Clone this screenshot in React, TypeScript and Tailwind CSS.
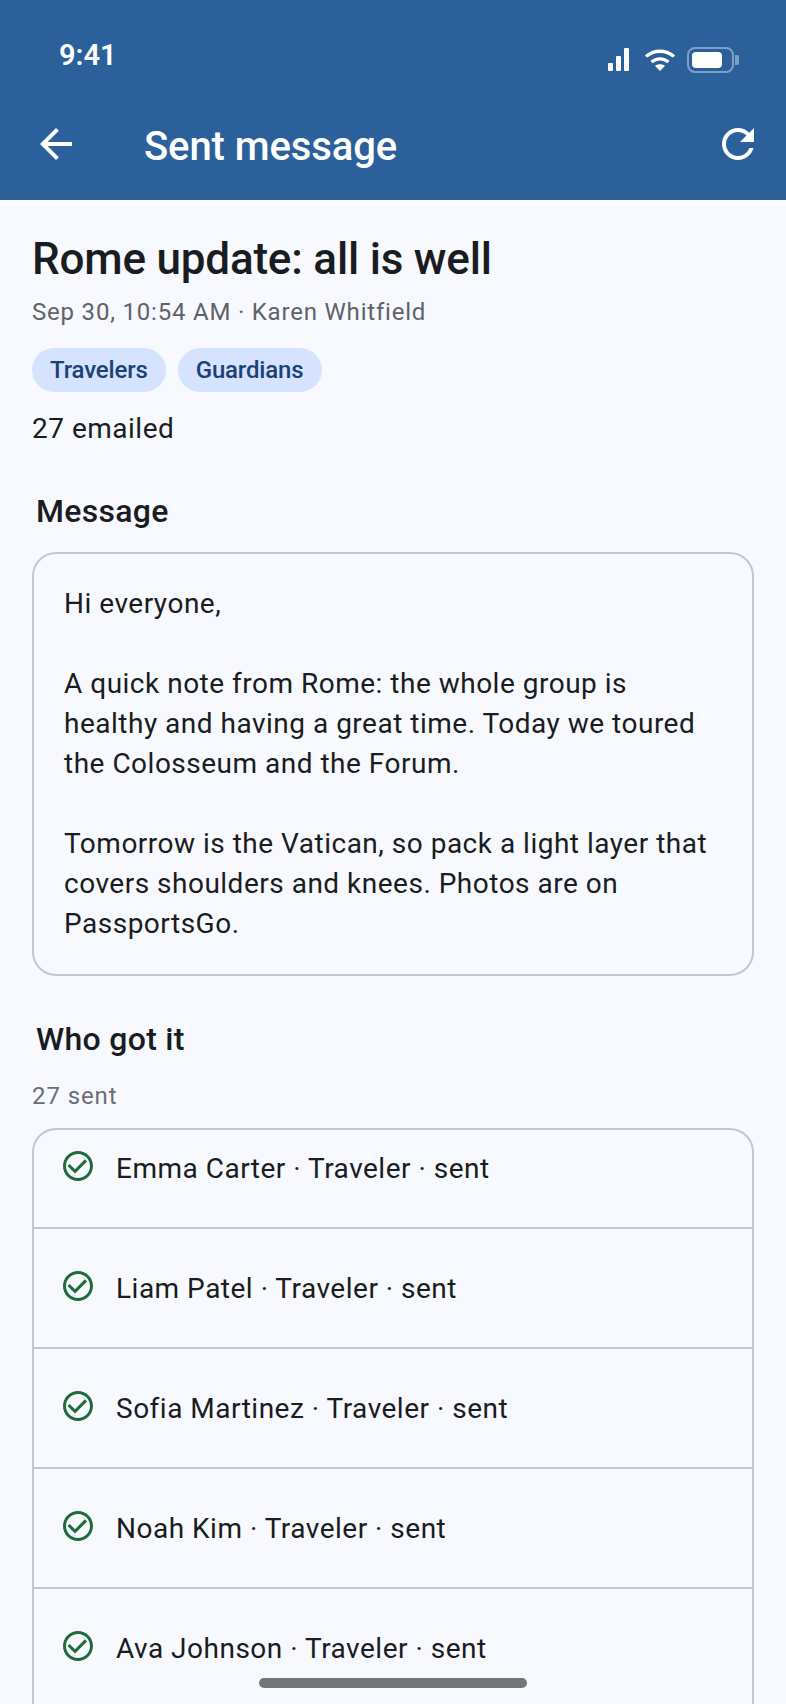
const recipients = [
  'Emma Carter · Traveler · sent',
  'Liam Patel · Traveler · sent',
  'Sofia Martinez · Traveler · sent',
  'Noah Kim · Traveler · sent',
  'Ava Johnson · Traveler · sent',
];

function CheckCircle() {
  return (
    <svg width="36" height="36" viewBox="0 0 24 24" fill="#1f6b3a" className="shrink-0">
      <path d="M16.59 7.58L10 14.17l-3.59-3.58L5 12l5 5 8-8zM12 2C6.48 2 2 6.48 2 12s4.48 10 10 10 10-4.48 10-10S17.52 2 12 2zm0 18c-4.42 0-8-3.58-8-8s3.58-8 8-8 8 3.58 8 8-3.58 8-8 8z" />
    </svg>
  );
}

function StatusIcons() {
  return (
    <div className="flex items-center">
      <svg width="22" height="24" viewBox="0 0 22 24" fill="white">
        <rect x="0" y="15" width="5" height="8" rx="1" />
        <rect x="8" y="8" width="5" height="15" rx="1" />
        <rect x="16" y="0" width="5" height="23" rx="1" />
      </svg>
      <svg width="32" height="24" viewBox="0 0 32 24" fill="none" stroke="white" strokeWidth="3.4" className="ml-[14px]">
        <path d="M2 8.5C10 1.5 22 1.5 30 8.5" />
        <path d="M7.5 14C12.5 9.8 19.5 9.8 24.5 14" />
        <path d="M16 23l-5-5.2c3-2 7-2 10 0z" fill="white" stroke="none" />
      </svg>
      <div className="ml-[11px] flex items-center">
        <div className="flex h-[26px] w-[47px] items-center rounded-[8px] border-2 border-[#7fa0c6] pl-[3px]">
          <div className="h-[16px] w-[30px] rounded-[4px] bg-white" />
        </div>
        <div className="ml-[1px] h-[10px] w-[4px] rounded-r-[2px] bg-[#7fa0c6]" />
      </div>
    </div>
  );
}

export default function App() {
  return (
    <div className="relative h-[1704px] w-[786px] overflow-hidden bg-[#f8f9ff] font-['Roboto',sans-serif] text-[#191c20]">
      <header className="h-[200px] bg-[#2b609b] text-white">
        <div className="flex h-[88px] items-end justify-between pb-[15px] pl-[59px] pr-[47px]">
          <span className="text-[29px] font-semibold leading-[36px]">9:41</span>
          <StatusIcons />
        </div>
        <div className="flex h-[112px] items-center pl-[32px] pr-[24px]">
          <svg width="48" height="48" viewBox="0 0 24 24" fill="white">
            <path d="M20 11H7.83l5.59-5.59L12 4l-8 8 8 8 1.41-1.41L7.83 13H20v-2z" />
          </svg>
          <h1 className="ml-[64px] flex-1 pt-[6px] text-[40px] font-medium leading-[48px] tracking-[-0.1px]">Sent message</h1>
          <svg width="48" height="48" viewBox="0 0 24 24" fill="white">
            <path d="M17.65 6.35C16.2 4.9 14.21 4 12 4c-4.42 0-7.99 3.58-7.99 8s3.57 8 7.99 8c3.73 0 6.84-2.55 7.73-6h-2.08c-.82 2.33-3.04 4-5.65 4-3.31 0-6-2.69-6-6s2.69-6 6-6c1.66 0 3.14.69 4.22 1.78L13 11h7V4l-2.35 2.35z" />
          </svg>
        </div>
      </header>

      <main className="px-[32px]">
        <h2 className="mt-[31px] text-[44px] font-medium leading-[56px] tracking-[-0.2px]">Rome update: all is well</h2>
        <p className="mt-[9px] text-[24px] leading-[32px] tracking-[0.8px] text-[#5f6268]">Sep 30, 10:54 AM · Karen Whitfield</p>
        <div className="mt-[20px] flex gap-[12px]">
          <span className="flex h-[44px] items-center rounded-full bg-[#d6e3ff] px-[18px] text-[24px] font-medium tracking-[-0.15px] text-[#1b4275]">Travelers</span>
          <span className="flex h-[44px] items-center rounded-full bg-[#d6e3ff] px-[18px] text-[24px] font-medium tracking-[-0.15px] text-[#1b4275]">Guardians</span>
        </div>
        <p className="mt-[17px] text-[28px] leading-[40px] tracking-[0.5px]">27 emailed</p>

        <h3 className="mt-[42px] pl-[4px] text-[32px] font-medium leading-[40px] tracking-[0.3px]">Message</h3>
        <div className="mt-[21px] h-[424px] rounded-[24px] border-2 border-[#c4c6cf] pl-[30px] pt-[30px]">
          <p className="whitespace-nowrap text-[28px] leading-[40px] tracking-[0.5px]">
            Hi everyone,
            <br />
            <br />
            A quick note from Rome: the whole group is
            <br />
            healthy and having a great time. Today we toured
            <br />
            the Colosseum and the Forum.
            <br />
            <br />
            Tomorrow is the Vatican, so pack a light layer that
            <br />
            covers shoulders and knees. Photos are on
            <br />
            PassportsGo.
          </p>
        </div>

        <h3 className="mt-[43px] pl-[4px] text-[32px] font-medium leading-[40px] tracking-[0.3px]">Who got it</h3>
        <p className="mt-[21px] text-[24px] leading-[32px] tracking-[0.9px] text-[#6b6e74]">27 sent</p>
        <div className="mt-[16px] h-[700px] rounded-t-[24px] border-x-2 border-t-2 border-[#c4c6cf]">
          {recipients.map((name, i) => (
            <div
              key={name}
              className={
                i === 0
                  ? 'flex h-[99px] gap-[20px] border-b-2 border-[#c4c6cf] pl-[26px] pt-[18px]'
                  : 'flex h-[120px] gap-[20px] border-b-2 border-[#c4c6cf] pl-[26px] pt-[39px]'
              }
            >
              <CheckCircle />
              <span className="mt-px text-[28px] leading-[40px] tracking-[0.5px]">{name}</span>
            </div>
          ))}
        </div>
      </main>

      <div className="absolute bottom-[16px] left-[259px] h-[10px] w-[268px] rounded-full bg-[#747579]" />
    </div>
  );
}
